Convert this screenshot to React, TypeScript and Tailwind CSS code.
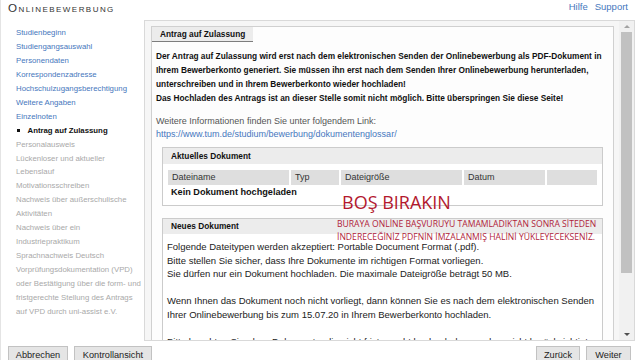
const navDone = [
  "Studienbeginn",
  "Studiengangsauswahl",
  "Personendaten",
  "Korrespondenzadresse",
  "Hochschulzugangsberechtigung",
  "Weitere Angaben",
  "Einzelnoten",
];

const navNext = [
  ["Personalausweis"],
  ["Lückenloser und aktueller", "Lebenslauf"],
  ["Motivationsschreiben"],
  ["Nachweis über außerschulische", "Aktivitäten"],
  ["Nachweis über ein", "Industriepraktikum"],
  ["Sprachnachweis Deutsch"],
  [
    "Vorprüfungsdokumentation (VPD)",
    "oder Bestätigung über die form- und",
    "fristgerechte Stellung des Antrags",
    "auf VPD durch uni-assist e.V.",
  ],
];

const columns = [
  { label: "Dateiname", width: "w-[121px]" },
  { label: "Typ", width: "w-[48px]" },
  { label: "Dateigröße", width: "w-[121px]" },
  { label: "Datum", width: "w-[81px]" },
  { label: "", width: "flex-1" },
];

function Button({ label, width }: { label: string; width: string }) {
  return (
    <div
      className={`${width} flex h-[19px] items-center justify-center border border-[#c2c2c2] bg-[#e5e5e5] pt-[1px] text-[9.2px] text-[#222]`}
    >
      {label}
    </div>
  );
}

function Scrollbar() {
  return (
    <div className="flex w-[15px] flex-col bg-[#f1f1f1]">
      <div className="flex h-[11px] items-center justify-center">
        <div className="h-0 w-0 border-x-[3px] border-b-[3px] border-x-transparent border-b-[#a3a3a3]" />
      </div>
      <div className="mx-[2px] h-[241px] bg-[#c1c1c1]" />
      <div className="flex-1" />
      <div className="flex h-[11px] items-center justify-center">
        <div className="h-0 w-0 border-x-[3px] border-t-[3px] border-x-transparent border-t-[#505050]" />
      </div>
    </div>
  );
}

export default function App() {
  return (
    <div className="relative h-[360px] w-[640px] overflow-hidden border-l border-[#e4e4e4] bg-white font-['Liberation_Sans',Arial,sans-serif]">
      <header className="flex h-[20px] items-start justify-between pl-[7px] pr-[12px]">
        <h1 className="text-[11.6px] leading-[15px] tracking-[1.45px] text-[#333] [font-variant:small-caps]">
          Onlinebewerbung
        </h1>
        <div className="flex gap-[7px] text-[9.5px] leading-[13px] text-[#4677bd]">
          <span>Hilfe</span>
          <span>Support</span>
        </div>
      </header>

      <div className="flex h-[321px]">
        <nav className="w-[143px] pl-[15px] pt-[6.4px] text-[7.8px] leading-[13.9px]">
          {navDone.map((item) => (
            <div key={item} className="text-[#4677bd]">
              {item}
            </div>
          ))}
          <div className="flex items-center font-bold text-[#111]">
            <span className="ml-[1px] mr-[8px] h-[2.5px] w-[2.5px] bg-[#111]" />
            Antrag auf Zulassung
          </div>
          {navNext.map((lines) => (
            <div key={lines[0]} className="text-[#a9a9a9]">
              {lines.map((line) => (
                <div key={line} className="whitespace-nowrap">
                  {line}
                </div>
              ))}
            </div>
          ))}
        </nav>

        <section className="flex w-[491px] border border-[#d9d9d9] bg-[#f6f6f6]">
          <div className="flex-1 overflow-hidden pl-[6px] pr-[5px] pt-[5px]">
            <div className="h-[330px] border border-[#d0d0d0] bg-[#fdfdfd]">
              <div className="flex h-[15px] w-[101px] items-center border-b border-[#7d7d7d] bg-[#ececec] pl-[8px] text-[8.3px] font-bold text-[#111]">
                Antrag auf Zulassung
              </div>

              <p className="mt-[7px] whitespace-nowrap px-[4px] text-[8.3px] font-bold leading-[14px] text-[#111]">
                Der Antrag auf Zulassung wird erst nach dem elektronischen Senden der Onlinebewerbung als PDF-Dokument in
                <br />
                Ihrem Bewerberkonto generiert. Sie müssen ihn erst nach dem Senden Ihrer Onlinebewerbung herunterladen,
                <br />
                unterschreiben und in Ihrem Bewerberkonto wieder hochladen!
                <br />
                Das Hochladen des Antrags ist an dieser Stelle somit nicht möglich. Bitte überspringen Sie diese Seite!
              </p>

              <div className="mt-[10px] px-[4px] text-[9px] leading-[12.5px]">
                <div className="text-[#555]">Weitere Informationen finden Sie unter folgendem Link:</div>
                <div className="text-[#4677bd]">https://www.tum.de/studium/bewerbung/dokumentenglossar/</div>
              </div>

              <div className="mx-[10px] mt-[7px] border border-[#cbcbcb] bg-white">
                <div className="flex h-[16px] items-center bg-[#ececec] pl-[8px] text-[8.3px] font-bold text-[#111]">
                  Aktuelles Dokument
                </div>
                <div className="px-[5px] pb-[4px] pt-[6px]">
                  <div className="flex gap-[2px]">
                    {columns.map((col, i) => (
                      <div
                        key={i}
                        className={`${col.width} flex h-[15px] items-center bg-[#dedede] pl-[4px] text-[9px] text-[#333]`}
                      >
                        {col.label}
                      </div>
                    ))}
                  </div>
                  <div className="flex h-[16px] items-center pl-[3px] text-[9.15px] font-bold text-[#111]">
                    Kein Dokument hochgeladen
                  </div>
                </div>
              </div>

              <div className="mx-[10px] mt-[12px] border border-[#cbcbcb] bg-white">
                <div className="flex h-[15px] items-center bg-[#ececec] pl-[8px] text-[8.3px] font-bold text-[#111]">
                  Neues Dokument
                </div>
                <div className="whitespace-nowrap px-[4px] pt-[6px] text-[9.5px] leading-[13.5px] text-[#222]">
                  <p>
                    Folgende Dateitypen werden akzeptiert: Portable Document Format (.pdf).
                    <br />
                    Bitte stellen Sie sicher, dass Ihre Dokumente im richtigen Format vorliegen.
                    <br />
                    Sie dürfen nur ein Dokument hochladen. Die maximale Dateigröße beträgt 50 MB.
                  </p>
                  <p className="mt-[13.5px]">
                    Wenn Ihnen das Dokument noch nicht vorliegt, dann können Sie es nach dem elektronischen Senden
                    <br />
                    Ihrer Onlinebewerbung bis zum 15.07.20 in Ihrem Bewerberkonto hochladen.
                  </p>
                  <p className="mt-[14px]">
                    Bitte beachten Sie, dass Dokumente, die nicht fristgerecht hochgeladen werden, nicht berücksichtigt
                  </p>
                </div>
              </div>
            </div>
          </div>
          <Scrollbar />
        </section>
      </div>

      <footer className="flex justify-between pl-[7px] pr-[9px] pt-[5px]">
        <div className="flex gap-[6px]">
          <Button label="Abbrechen" width="w-[60px]" />
          <Button label="Kontrollansicht" width="w-[78px]" />
        </div>
        <div className="flex gap-[6px]">
          <Button label="Zurück" width="w-[44px]" />
          <Button label="Weiter" width="w-[45px]" />
        </div>
      </footer>

      <div className="pointer-events-none absolute left-[341px] top-[193px] whitespace-nowrap font-['Open_Sans',sans-serif] text-[18px] leading-[18px] text-[#b3182d]">
        BOŞ BIRAKIN
      </div>
      <div className="pointer-events-none absolute left-[336px] top-[218px] whitespace-nowrap font-['Open_Sans',sans-serif] text-[8.6px] leading-[12.5px] text-[#b0223a]">
        BURAYA ONLİNE BAŞVURUYU TAMAMLADIKTAN SONRA SİTEDEN
        <br />
        İNDERECEĞİNİZ PDFNİN İMZALANMIŞ HALİNİ YÜKLEYECEKSENİZ.
      </div>
    </div>
  );
}
